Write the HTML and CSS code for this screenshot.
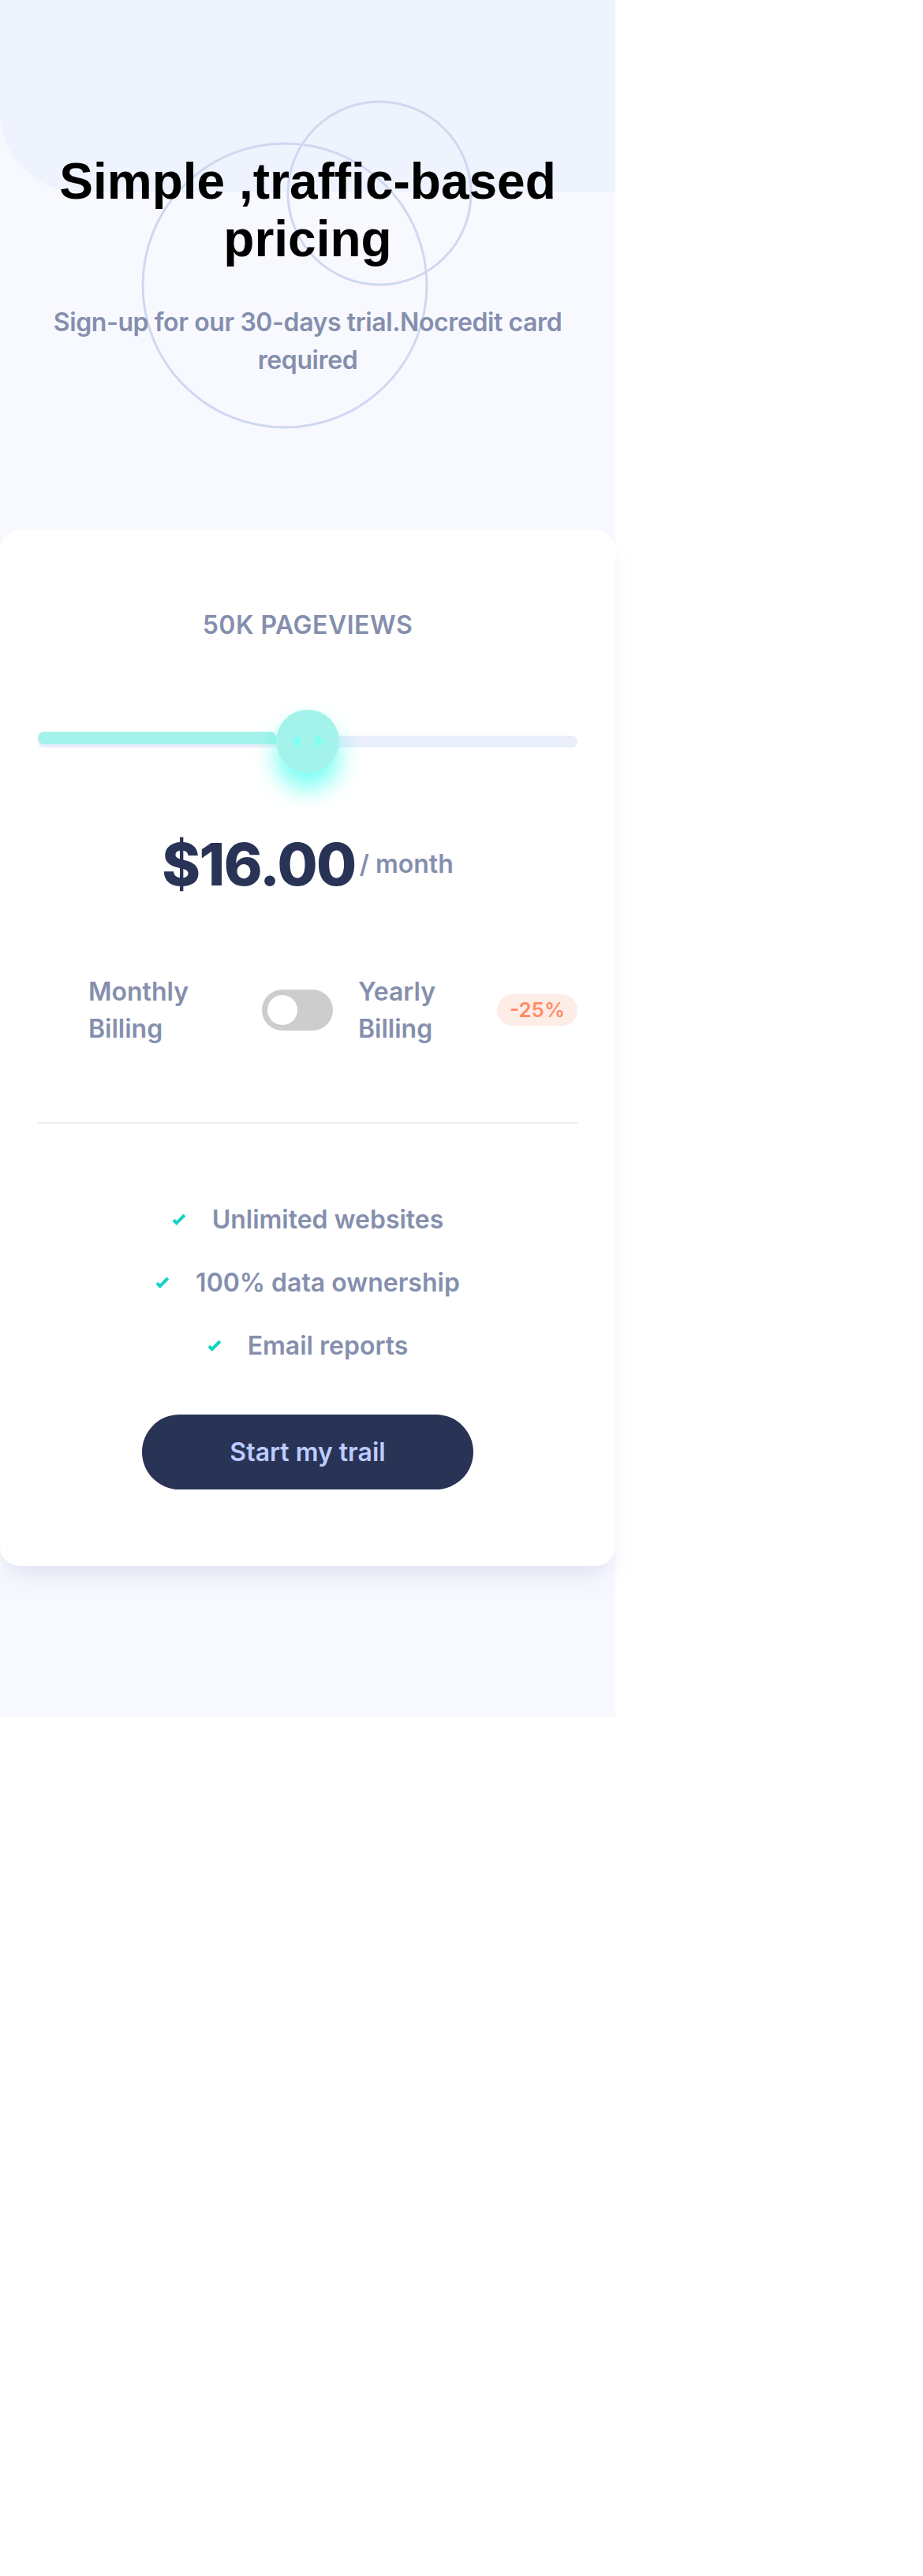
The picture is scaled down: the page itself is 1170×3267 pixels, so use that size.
FILE: index.html
```html
<!DOCTYPE html>
<html lang="en">
<head>
<meta charset="utf-8">
<title>Interactive pricing component</title>
<link rel="stylesheet" href="styles.css">
</head>
<body>
<div class="page">
  <div class="bg-shape"></div>
  <svg class="circles" width="780" height="600" viewBox="0 0 780 600" aria-hidden="true">
    <circle cx="361" cy="362" r="180" fill="none" stroke="#cfd8ef" stroke-width="3"/>
    <circle cx="481" cy="245" r="116" fill="none" stroke="#cfd8ef" stroke-width="3"/>
  </svg>
  <header class="hero">
    <h1 class="hero-title">Simple ,traffic-based pricing</h1>
    <p class="hero-sub">Sign-up for our 30-days trial.Nocredit card required</p>
  </header>
  <main class="card">
    <p class="views">50K PAGEVIEWS</p>
    <div class="slider">
      <div class="track"></div>
      <div class="fill" style="width: 302px"></div>
      <div class="thumb" style="left: 342px">
        <svg width="42" height="20" viewBox="0 0 22 13" preserveAspectRatio="none" aria-hidden="true"><path fill="#80fff3" d="M16 2.558v7.884a1 1 0 001.735.679l3.639-3.943a1 1 0 000-1.356l-3.64-3.943A1 1 0 0016 2.558zM6 2.558v7.884a1 1 0 01-1.735.679L.626 7.178a1 1 0 010-1.356l3.64-3.943A1 1 0 016 2.558z"/></svg>
      </div>
    </div>
    <div class="price"><span class="amount">$16.00</span><span class="per">/ month</span></div>
    <div class="billing">
      <span class="billing-label">Monthly<br>Billing</span>
      <span class="toggle"><span class="knob"></span></span>
      <span class="billing-label yearly">Yearly<br>Billing</span>
      <span class="badge">-25%</span>
    </div>
    <hr class="divider">
    <ul class="features">
      <li class="feature"><svg class="check" width="18" height="16" viewBox="0 0 9 8" aria-hidden="true"><path fill="none" stroke="#10d5c2" stroke-width="2" d="M1 4.134l1.907 1.908L7.949 1"/></svg><span>Unlimited websites</span></li>
      <li class="feature"><svg class="check" width="18" height="16" viewBox="0 0 9 8" aria-hidden="true"><path fill="none" stroke="#10d5c2" stroke-width="2" d="M1 4.134l1.907 1.908L7.949 1"/></svg><span>100% data ownership</span></li>
      <li class="feature"><svg class="check" width="18" height="16" viewBox="0 0 9 8" aria-hidden="true"><path fill="none" stroke="#10d5c2" stroke-width="2" d="M1 4.134l1.907 1.908L7.949 1"/></svg><span>Email reports</span></li>
    </ul>
    <button class="cta" type="button">Start my trail</button>
  </main>
</div>
</body>
</html>
```
FILE: styles.css
```css
* { box-sizing: border-box; }

html, body {
  margin: 0;
  padding: 0;
  background: #ffffff;
}

body {
  font-family: Inter, "Noto Sans", sans-serif;
  color: #858fad;
}

.page {
  position: relative;
  width: 780px;
  background: #f8f9ff;
  padding-bottom: 192px;
}

.bg-shape {
  position: absolute;
  top: 0;
  left: 0;
  width: 780px;
  height: 243px;
  background: #eef3fe;
  border-bottom-left-radius: 100px;
}

.circles {
  position: absolute;
  top: 0;
  left: 0;
  pointer-events: none;
}

.hero {
  position: relative;
  padding-top: 194px;
  text-align: center;
}

.hero-title {
  margin: 0;
  font-family: "Liberation Sans", Arial, sans-serif;
  font-weight: 700;
  font-size: 64px;
  line-height: 73px;
  color: #000000;
}

.hero-sub {
  margin: 45px 0 0;
  padding: 0 48px;
  font-size: 32px;
  line-height: 48px;
  font-weight: 600;
  letter-spacing: -0.4px;
  color: #858fad;
}

.card {
  position: relative;
  margin-top: 191px;
  background: #ffffff;
  border-radius: 25px;
  padding: 101px 48px 97px;
  box-shadow: 0 20px 30px -10px rgba(127, 137, 185, 0.22);
  text-align: center;
}

.views {
  margin: 0;
  font-size: 32px;
  line-height: 40px;
  font-weight: 600;
  letter-spacing: 0.5px;
  color: #858fad;
}

.slider {
  position: relative;
  height: 80px;
  margin-top: 87px;
  padding-top: 33px;
}

.track {
  height: 15px;
  border-radius: 8px;
  background: #eaeefb;
}

.fill {
  position: absolute;
  left: 0;
  top: 28px;
  height: 16px;
  background: #a4f3eb;
  border-radius: 8px 7px 2px 8px;
}

.thumb {
  position: absolute;
  top: 0;
  width: 80px;
  height: 80px;
  margin-left: -40px;
  border-radius: 50%;
  background: #a4f3eb;
  box-shadow: 0 20px 30px rgba(0, 255, 231, 0.55);
  display: flex;
  align-items: center;
  justify-content: center;
}

.price {
  margin-top: 78px;
  display: flex;
  justify-content: center;
  align-items: center;
  gap: 5px;
}

.amount {
  font-size: 74px;
  line-height: 76px;
  font-weight: 800;
  letter-spacing: -1.5px;
  color: #293356;
}

.per {
  font-size: 32px;
  line-height: 48px;
  font-weight: 600;
  color: #858fad;
}

.billing {
  margin-top: 100px;
  display: grid;
  grid-template-columns: 220px 90px 208px 102px;
  align-items: center;
  padding-left: 64px;
  text-align: left;
}

.billing-label {
  font-size: 32px;
  line-height: 47px;
  font-weight: 600;
  color: #858fad;
}

.billing-label.yearly {
  padding-left: 32px;
}

.toggle {
  position: relative;
  display: block;
  width: 90px;
  height: 52px;
  border-radius: 26px;
  background: #cdcdcd;
}

.knob {
  position: absolute;
  left: 7px;
  top: 7px;
  width: 38px;
  height: 38px;
  border-radius: 50%;
  background: #ffffff;
}

.badge {
  display: block;
  width: 102px;
  height: 40px;
  border-radius: 20px;
  background: #feece7;
  color: #ff8c66;
  font-size: 26px;
  line-height: 40px;
  font-weight: 600;
  text-align: center;
}

.divider {
  margin: 95px 0 0;
  height: 2px;
  border: none;
  background: #eaecf3;
}

.features {
  list-style: none;
  margin: 98px 0 0;
  padding: 0;
  display: flex;
  flex-direction: column;
  gap: 32px;
}

.feature {
  display: flex;
  justify-content: center;
  align-items: center;
  gap: 33px;
  font-size: 32px;
  line-height: 48px;
  font-weight: 600;
  color: #858fad;
}

.check {
  flex: none;
}

.cta {
  display: block;
  margin: 63px auto 0;
  width: 420px;
  height: 95px;
  border: none;
  border-radius: 48px;
  background: #293356;
  color: #bdccff;
  font-family: Inter, "Noto Sans", sans-serif;
  font-size: 32px;
  font-weight: 600;
}
```
